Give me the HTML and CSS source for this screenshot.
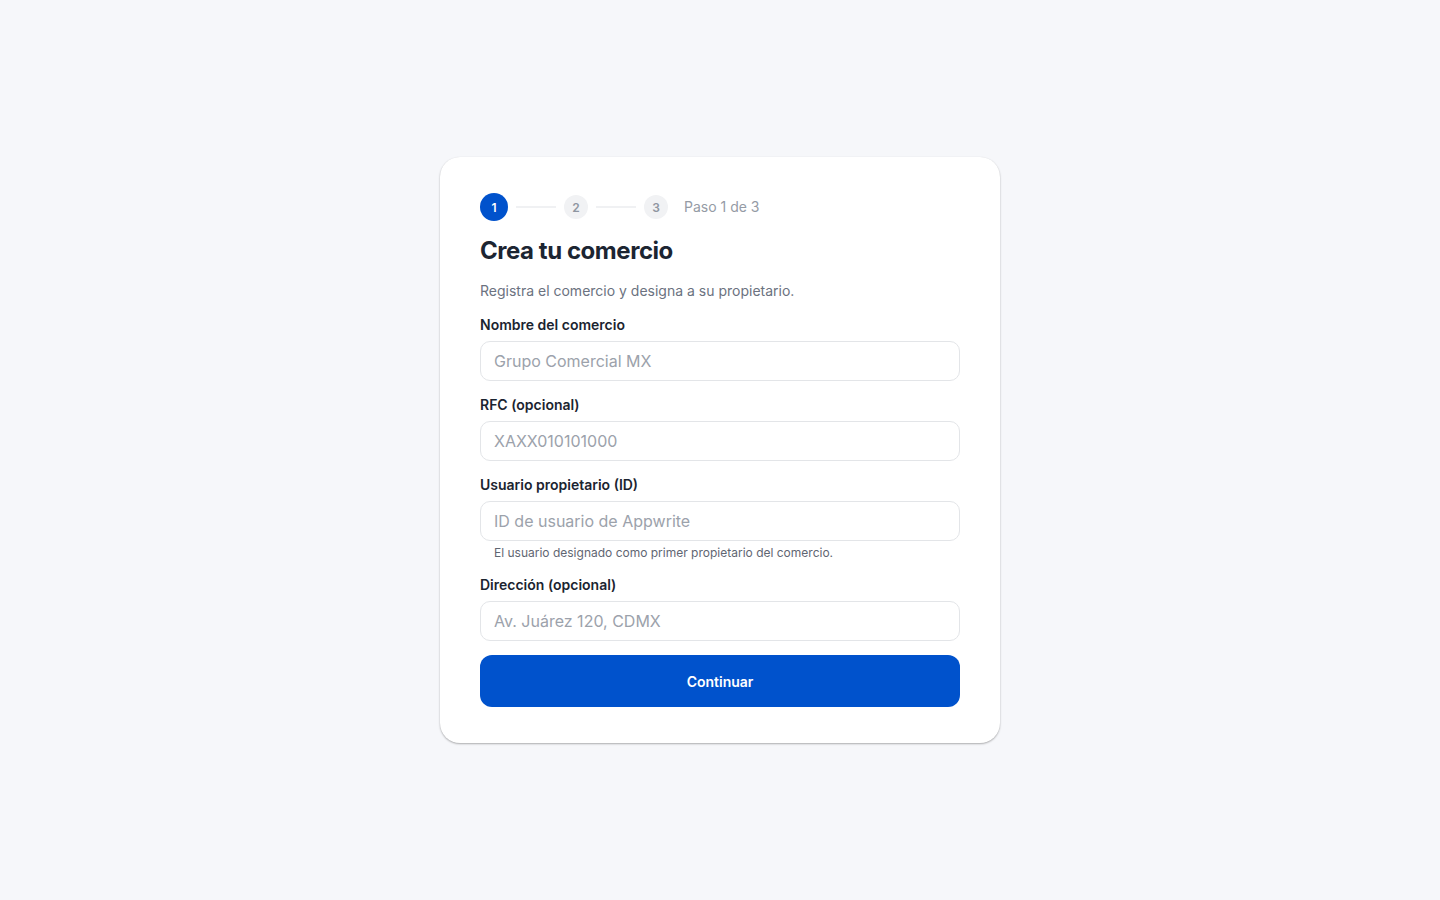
FILE: index.html
```html
<!DOCTYPE html>
<html lang="es">
<head>
<meta charset="utf-8">
<title>Crea tu comercio</title>
<link rel="stylesheet" href="styles.css">
</head>
<body>
<main class="page">
  <section class="card">
    <div class="stepper">
      <span class="step step-active">1</span>
      <span class="step-line"></span>
      <span class="step">2</span>
      <span class="step-line"></span>
      <span class="step">3</span>
      <span class="step-text">Paso 1 de 3</span>
    </div>
    <h1 class="title">Crea tu comercio</h1>
    <p class="subtitle">Registra el comercio y designa a su propietario.</p>
    <div class="field">
      <label class="label">Nombre del comercio</label>
      <input class="input" type="text" placeholder="Grupo Comercial MX">
    </div>
    <div class="field">
      <label class="label">RFC (opcional)</label>
      <input class="input" type="text" placeholder="XAXX010101000">
    </div>
    <div class="field">
      <label class="label">Usuario propietario (ID)</label>
      <input class="input" type="text" placeholder="ID de usuario de Appwrite">
      <span class="help">El usuario designado como primer propietario del comercio.</span>
    </div>
    <div class="field">
      <label class="label">Dirección (opcional)</label>
      <input class="input" type="text" placeholder="Av. Juárez 120, CDMX">
    </div>
    <button class="button" type="button">Continuar</button>
  </section>
</main>
</body>
</html>
```

FILE: styles.css
```css
* { box-sizing: border-box; }
html, body {
  margin: 0;
  padding: 0;
  background: #f6f7fa;
  font-family: Inter, "Noto Sans", sans-serif;
  color: #1b2430;
}
.page {
  min-height: 900px;
  display: flex;
  justify-content: center;
  padding-top: 157px;
}
.card {
  width: 560px;
  height: 586px;
  background: #ffffff;
  border-radius: 20px;
  padding: 36px 40px;
  display: flex;
  flex-direction: column;
  gap: 14px;
  box-shadow: 0 1px 2px rgba(0, 0, 0, 0.3), 0 0 1px rgba(0, 0, 0, 0.06);
}
.stepper {
  display: flex;
  align-items: center;
  gap: 8px;
  height: 28px;
}
.step {
  width: 24px;
  height: 24px;
  border-radius: 50%;
  background: #f1f2f4;
  color: #8f96a1;
  font-size: 12px;
  font-weight: 600;
  display: flex;
  align-items: center;
  justify-content: center;
}
.step-active {
  width: 28px;
  height: 28px;
  background: #0052cc;
  color: #ffffff;
}
.step-line {
  width: 40px;
  height: 2px;
  background: #f0f1f3;
}
.step-text {
  margin-left: 8px;
  font-size: 14px;
  line-height: 20px;
  color: #959ba5;
  margin-top: -1px;
}
.title {
  margin: 0;
  font-size: 24px;
  line-height: 32px;
  font-weight: 700;
  letter-spacing: -0.45px;
  color: #1c2532;
}
.subtitle {
  margin: 0;
  font-size: 14px;
  line-height: 20px;
  color: #6b7280;
}
.field {
  display: flex;
  flex-direction: column;
}
.label {
  font-size: 14px;
  line-height: 20px;
  font-weight: 600;
  color: #1b2430;
  margin-bottom: 6px;
}
.input {
  height: 40px;
  width: 100%;
  border: 1px solid #e3e5e8;
  border-radius: 10px;
  padding: 0 13px;
  font-family: Inter, "Noto Sans", sans-serif;
  font-size: 16px;
  color: #1b2430;
  background: #ffffff;
  outline: none;
}
.input::placeholder {
  color: #9ca2ab;
}
.help {
  margin-top: 4px;
  padding-left: 14px;
  font-size: 12px;
  line-height: 16px;
  color: #5f6672;
}
.button {
  height: 52px;
  width: 100%;
  border: none;
  border-radius: 12px;
  background: #0052cc;
  color: #ffffff;
  font-family: Inter, "Noto Sans", sans-serif;
  font-size: 14px;
  font-weight: 600;
  cursor: pointer;
}
```
